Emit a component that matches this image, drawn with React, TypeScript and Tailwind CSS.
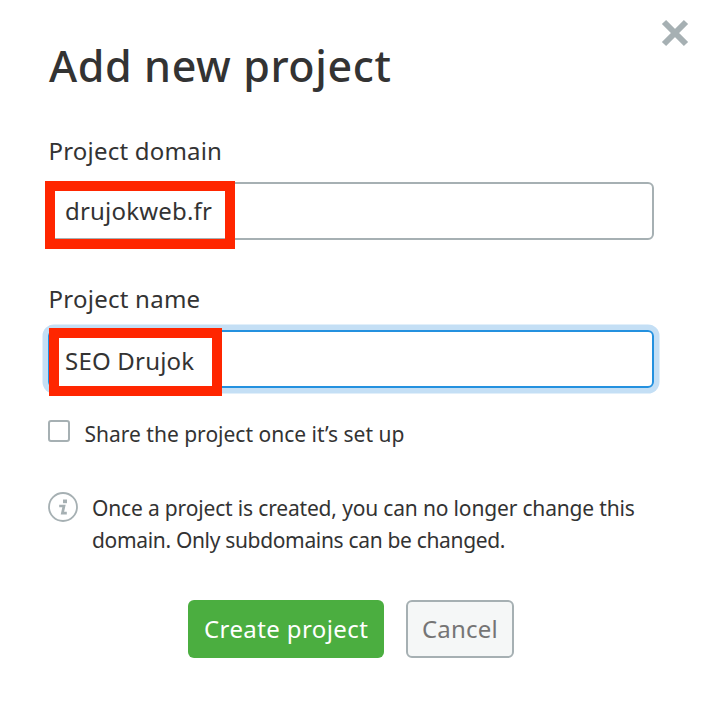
import React, { useState } from 'react';

const App = () => {
  const [shared, setShared] = useState(false);

  return (
    <div className="relative h-[710px] w-[708px] overflow-hidden bg-white px-12 pt-[38px] font-['Noto_Sans',sans-serif] text-[#333]">
      {/* Close */}
      <button aria-label="Close" className="absolute left-[661px] top-[19px]">
        <svg width="28" height="28" viewBox="0 0 28 28" fill="none" stroke="#a6b0b3" strokeWidth="6">
          <path d="M3 3l22 22M25 3L3 25" />
        </svg>
      </button>

      <h1 className="h-14 whitespace-nowrap pl-px text-[43px] font-medium leading-[56px] tracking-[0.6px]">
        Add new project
      </h1>

      {/* Domain */}
      <div className="mt-[41px]">
        <div className="h-8 whitespace-nowrap pl-[0.5px] text-[24px] leading-8 tracking-[0.2px]">
          Project domain
        </div>
        <div className="relative mt-[15px] flex h-[58px] w-[606px] items-center rounded-md border-2 border-[#a6b0b3] pl-[15px] text-[24px] leading-8 tracking-[0.2px]">
          <span>drujokweb.fr</span>
          <div className="absolute -left-[5px] -top-[3px] h-[68px] w-[190px] border-10 border-[#ff2600]" />
        </div>
      </div>

      {/* Name */}
      <div className="mt-[43px]">
        <div className="h-8 whitespace-nowrap pl-[0.5px] text-[24px] leading-8 tracking-[0.25px]">
          Project name
        </div>
        <div className="relative mt-[15px] flex h-[58px] w-[606px] items-center rounded-md border-2 border-[#2491df] pl-[15px] pt-[3px] text-[24px] leading-8 tracking-[0.2px] shadow-[0_0_0_5.5px_#c4dff5]">
          <span>SEO Drujok</span>
          <div className="absolute -left-px -top-1 h-[68px] w-[173px] border-10 border-[#ff2600]" />
        </div>
      </div>

      <label className="mt-[30px] flex h-8 text-[21px] leading-8">
        <input
          type="checkbox"
          checked={shared}
          onChange={(e) => setShared(e.target.checked)}
          className="mt-[2px] size-[22px] shrink-0 appearance-none rounded-[3px] border-2 border-[#a6b0b3]"
        />
        <span className="ml-[14.5px] whitespace-nowrap">Share the project once it’s set up</span>
      </label>

      {/* Note */}
      <div className="mt-[42px] flex h-16 text-[21px] leading-8">
        <svg className="shrink-0" width="30" height="30" viewBox="0 0 30 30" fill="none">
          <circle cx="15" cy="15" r="14" stroke="#a6b0b3" strokeWidth="1.8" />
          <path d="M15 7.5h4v3.7h-4z" fill="#a6b0b3" />
          <path d="M11.2 14h4.8l-1.6 7.2h4.4" stroke="#a6b0b3" strokeWidth="2.7" />
        </svg>
        <p className="ml-[14px] whitespace-nowrap">
          <span className="tracking-[-0.165px]">Once a project is created, you can no longer change this</span>
          <br />
          <span className="tracking-[-0.33px]">domain. Only subdomains can be changed.</span>
        </p>
      </div>

      <div className="ml-[140px] mt-[44px] flex gap-[22px] text-[24px] leading-8">
        <button className="h-[58px] w-[196px] whitespace-nowrap rounded-md bg-[#4bae40] pl-4 text-left tracking-[0.4px] text-white">
          Create project
        </button>
        <button className="h-[58px] w-[108px] rounded-md border-2 border-[#a6b0b3] bg-[#f5f7f7] pl-[14px] text-left tracking-[0.2px] text-[#757575]">
          Cancel
        </button>
      </div>
    </div>
  );
};

export default App;
